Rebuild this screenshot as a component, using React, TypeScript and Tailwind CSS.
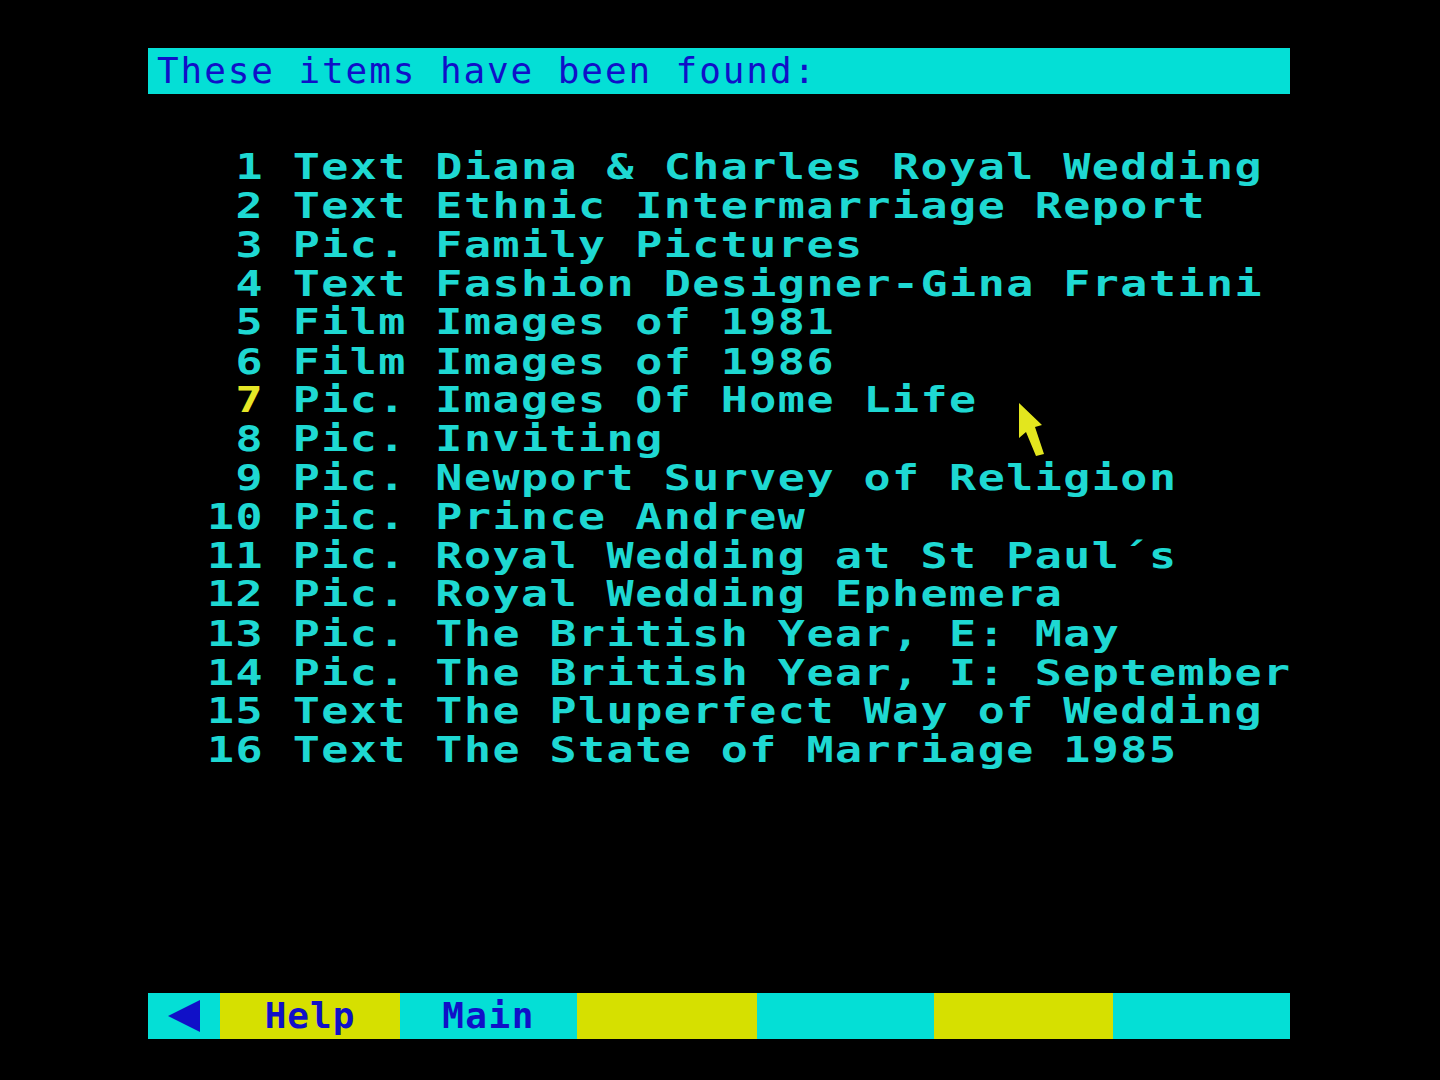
import React from "react";

const rows: [string, string][] = [
  [" 1", "Text Diana & Charles Royal Wedding"],
  [" 2", "Text Ethnic Intermarriage Report"],
  [" 3", "Pic. Family Pictures"],
  [" 4", "Text Fashion Designer-Gina Fratini"],
  [" 5", "Film Images of 1981"],
  [" 6", "Film Images of 1986"],
  [" 7", "Pic. Images Of Home Life"],
  [" 8", "Pic. Inviting"],
  [" 9", "Pic. Newport Survey of Religion"],
  ["10", "Pic. Prince Andrew"],
  ["11", "Pic. Royal Wedding at St Paul\u00b4s"],
  ["12", "Pic. Royal Wedding Ephemera"],
  ["13", "Pic. The British Year, E: May"],
  ["14", "Pic. The British Year, I: September"],
  ["15", "Text The Pluperfect Way of Wedding"],
  ["16", "Text The State of Marriage 1985"],
];

const mono = { fontFamily: '"DejaVu Sans Mono", "Liberation Mono", monospace' };

export default function App() {
  return (
    <div className="relative flex h-[1080px] w-[1440px] flex-col overflow-hidden bg-black" style={mono}>
      <div className="ml-[148px] mt-[48px] flex h-[46px] w-[1142px] items-center bg-[#04dfd6] pl-[9px]">
        <span className="whitespace-pre text-[36px] leading-none tracking-[1.9px] text-[#1010c8]">
          These items have been found:
        </span>
      </div>

      <div className="ml-[207px] mt-[54px] flex h-[622px] flex-col">
        <div className="flex origin-top scale-y-[0.8] flex-col">
          {rows.map(([n, t]) => (
            <div
              key={n}
              className="h-[48.59px] whitespace-pre text-[45px] font-bold leading-[48.59px] tracking-[1.45px] text-[#1ed8d2]"
            >
              <span className={n === " 7" ? "text-[#e6e626]" : ""}>{n}</span>
              {" " + t}
            </div>
          ))}
        </div>
      </div>

      <div className="flex-1" />

      <div className="mb-[41px] ml-[148px] flex h-[46px] w-[1142px]">
        <div className="flex w-[72px] items-center justify-center bg-[#04dfd6]">
          <svg width="34" height="34" viewBox="0 0 34 34">
            <polygon points="1,17 33,1 33,33" fill="#1010c8" />
          </svg>
        </div>
        <div className="flex w-[180px] items-center justify-center bg-[#d6e000]">
          <span className="text-[36px] font-bold leading-none tracking-[1px] text-[#1010c8]">Help</span>
        </div>
        <div className="flex w-[177px] items-center justify-center bg-[#04dfd6]">
          <span className="text-[36px] font-bold leading-none tracking-[1.5px] text-[#1010c8]">Main</span>
        </div>
        <div className="w-[180px] bg-[#d6e000]" />
        <div className="w-[177px] bg-[#04dfd6]" />
        <div className="w-[179px] bg-[#d6e000]" />
        <div className="w-[177px] bg-[#04dfd6]" />
      </div>

      <svg className="absolute left-[1018px] top-[402px]" width="28" height="54" viewBox="0 0 28 54">
        <polygon points="1,1 24,23 17,25 26,52 18,54 8,30 1,36" fill="#e3e61e" />
      </svg>
    </div>
  );
}
